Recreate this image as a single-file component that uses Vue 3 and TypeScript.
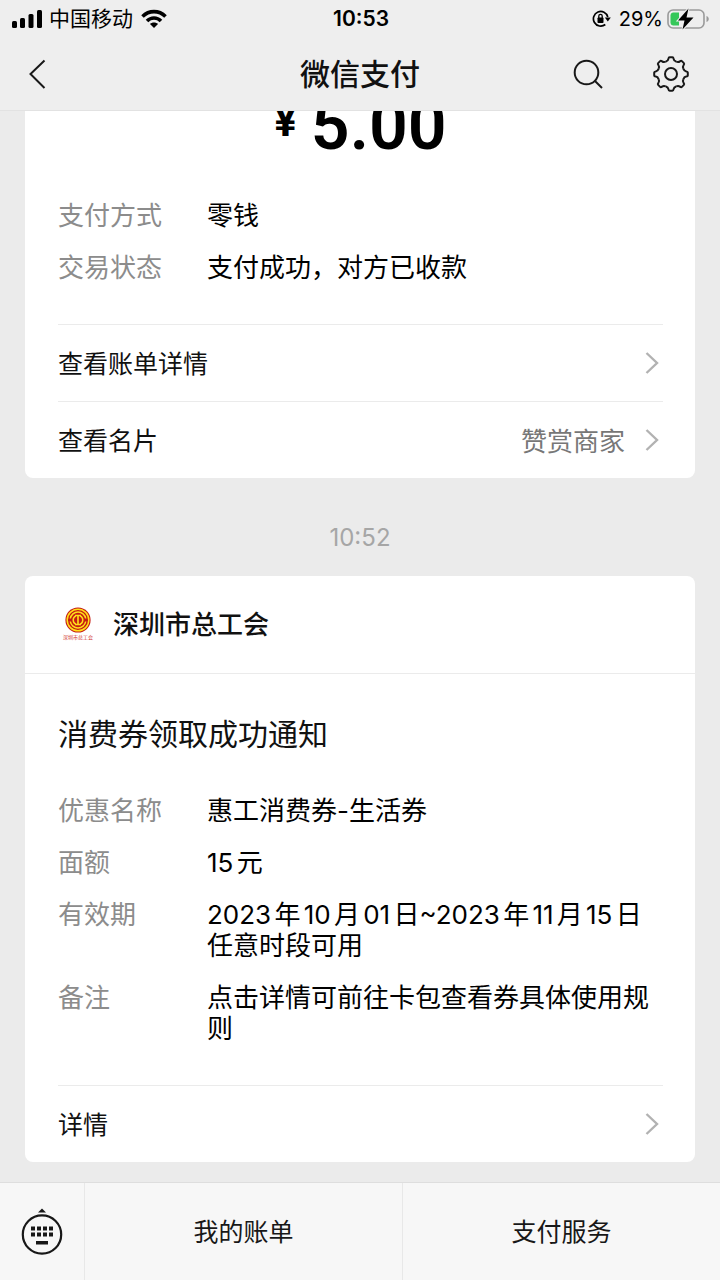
<script setup lang="ts">
interface Field {
  label: string
  value: string
}

const paymentFields: Field[] = [
  { label: '支付方式', value: '零钱' },
  { label: '交易状态', value: '支付成功，对方已收款' },
]

const couponFields: Field[] = [
  { label: '优惠名称', value: '惠工消费券-生活券' },
  { label: '面额', value: '15元' },
  { label: '有效期', value: '2023年10月01日~2023年11月15日\n任意时段可用' },
  { label: '备注', value: '点击详情可前往卡包查看券具体使用规则' },
]

const keyColumns = [0, 1, 2, 3]
const gearTeeth = [0, 45, 90, 135, 180, 225, 270, 315]
</script>

<template>
  <div class="screen">
    <header class="top">
      <div class="status">
        <div class="status-side">
          <svg class="signal" width="31" height="20" viewBox="0 0 31 20" aria-hidden="true">
            <rect x="0" y="12" width="5" height="7" rx="1.5" />
            <rect x="8" y="9" width="5" height="10" rx="1.5" />
            <rect x="16.5" y="5" width="5" height="14" rx="1.5" />
            <rect x="25" y="1" width="5" height="18" rx="1.5" />
          </svg>
          <span class="carrier">中国移动</span>
          <svg width="26" height="20" viewBox="0 0 26 20" aria-hidden="true">
            <g fill="none" stroke="#000" stroke-width="3.6">
              <path d="M1.5 7.5C8 1 18 1 24.500 7.500" />
              <path d="M6 12C10 8 16 8 20 12" />
            </g>
            <path d="M13 19L9 15C11 13 15 13 17 15Z" />
          </svg>
        </div>
        <time class="clock">10:53</time>
        <div class="status-side status-right">
          <svg width="19" height="18" viewBox="0 0 19 18" aria-hidden="true">
            <path d="M13.300 14.500A7.300 7.300 0 1 1 15.800 7" fill="none" stroke="#000" stroke-width="1.700" />
            <path d="M12.800 7.500H18.800L15.800 11.500Z" />
            <rect x="5.500" y="7.500" width="6" height="5.500" rx="0.800" />
            <path d="M6.800 8V6A1.700 1.700 0 0 1 10.200 6V8" fill="none" stroke="#000" stroke-width="1.300" />
          </svg>
          <span class="percent">29%</span>
          <svg width="43" height="22" viewBox="0 0 43 22" aria-hidden="true">
            <rect x="1" y="2" width="36" height="18" rx="5" fill="none" stroke="#9a9a9a" stroke-width="1.600" />
            <path d="M39.500 8C42.500 9 42.500 13 39.500 14Z" fill="#9a9a9a" />
            <path d="M6 4.500H12V17.500H6A3 3 0 0 1 3.500 15V7A3 3 0 0 1 6 4.500Z" fill="#35c759" />
            <path d="M21.500 0.500L11 12.500H17.500L15.500 21.500L26.500 9.500H19.500Z" stroke="#eee" stroke-width="2" paint-order="stroke" />
          </svg>
        </div>
      </div>
      <nav class="nav">
        <div class="nav-side">
          <button type="button" class="icon-button" aria-label="返回">
            <svg width="36" height="36" viewBox="0 0 36 36" class="line">
              <path d="M24.500 4.500L10.500 18L24.500 32" />
            </svg>
          </button>
        </div>
        <h1>微信支付</h1>
        <div class="nav-side nav-right">
          <button type="button" class="icon-button" aria-label="搜索">
            <svg width="36" height="36" viewBox="0 0 36 36" class="line">
              <circle cx="16.500" cy="16.500" r="11.800" />
              <path d="M24.500 24.500L32 32" />
            </svg>
          </button>
          <button type="button" class="icon-button" aria-label="设置">
            <svg width="36" height="36" viewBox="-18 -18 36 36" class="line">
              <g v-for="angle in gearTeeth" :key="angle" :transform="`rotate(${angle})`">
                <path d="M-5.200 -12.500Q-2.900 -13 -2.600 -15.200Q-2.400 -16.800 -1.400 -16.800H1.400Q2.400 -16.800 2.600 -15.200Q2.900 -13 5.200 -12.500" />
              </g>
              <circle r="6" />
            </svg>
          </button>
        </div>
      </nav>
    </header>

    <main class="messages">
      <article class="card">
        <div class="content">
          <p class="amount"><span class="currency">¥</span><span>5.00</span></p>
          <dl>
            <div v-for="field in paymentFields" :key="field.label" class="field">
              <dt>{{ field.label }}</dt>
              <dd>{{ field.value }}</dd>
            </div>
          </dl>
        </div>
        <a href="#bill" class="link-row">
          <span class="link-text">查看账单详情</span>
          <svg class="chevron" width="14" height="24" viewBox="0 0 14 24"><path d="M1.500 2L12 12L1.500 22" /></svg>
        </a>
        <a href="#merchant" class="link-row">
          <span class="link-text">查看名片</span>
          <span class="link-text merchant">赞赏商家</span>
          <svg class="chevron" width="14" height="24" viewBox="0 0 14 24"><path d="M1.500 2L12 12L1.500 22" /></svg>
        </a>
      </article>

      <time class="timestamp">10:52</time>

      <article class="card">
        <header class="sender">
          <svg width="40" height="40" viewBox="0 0 40 40" aria-hidden="true">
            <circle cx="20" cy="15" r="12.600" fill="#c51a12" />
            <g fill="none" stroke="#ffdf1b">
              <circle cx="20" cy="15" r="10.800" stroke-width="1.500" />
              <path d="M12.300 13.500A7.800 7.800 0 0 1 27.700 13.500M12.300 16.500A7.800 7.800 0 0 0 27.700 16.500" stroke-width="1.500" />
              <path d="M17.800 10.800A4.700 4.700 0 0 0 17.800 19.200M22.200 10.800A4.700 4.700 0 0 1 22.200 19.200" stroke-width="1.500" />
              <path d="M20 10V20M17 10.500H23M17 19.500H23" stroke-width="1.600" />
            </g>
            <text x="20" y="34" text-anchor="middle" class="logo-name">深圳市总工会</text>
          </svg>
          <h2>深圳市总工会</h2>
        </header>
        <div class="content">
          <h3>消费券领取成功通知</h3>
          <dl>
            <div v-for="field in couponFields" :key="field.label" class="field">
              <dt>{{ field.label }}</dt>
              <dd>{{ field.value }}</dd>
            </div>
          </dl>
        </div>
        <a href="#coupon" class="link-row">
          <span class="link-text">详情</span>
          <svg class="chevron" width="14" height="24" viewBox="0 0 14 24"><path d="M1.500 2L12 12L1.500 22" /></svg>
        </a>
      </article>
    </main>

    <footer class="menu">
      <button type="button" class="keyboard" aria-label="键盘">
        <svg width="42" height="48" viewBox="0 0 42 48">
          <path d="M17 4.500L21 0.500L25 4.500Z" />
          <circle cx="21" cy="26.500" r="19.200" fill="none" stroke="#181818" stroke-width="2.200" />
          <g v-for="column in keyColumns" :key="column">
            <rect :x="10 + column * 6" y="18.500" width="4" height="4" />
            <rect :x="10 + column * 6" y="24.500" width="4" height="4" />
          </g>
          <rect x="15" y="33" width="12" height="3.500" />
        </svg>
      </button>
      <button type="button" class="menu-item">我的账单</button>
      <button type="button" class="menu-item">支付服务</button>
    </footer>
  </div>
</template>

<style>
body {
  margin: 0;
  background: #ebebeb;
}
</style>

<style scoped>
.screen {
  height: 100vh;
  display: flex;
  flex-direction: column;
  overflow: hidden;
  background: #ebebeb;
  color: #111;
  font-family: Inter, "Noto Sans CJK SC", sans-serif;
}

h1, h2, h3, p, dl, dd {
  margin: 0;
}

button {
  padding: 0;
  border: 0;
  background: none;
  color: inherit;
  font: inherit;
}

svg {
  display: block;
  flex: none;
}

.top {
  flex: none;
  background: #eee;
  border-bottom: 1px solid #e2e2e2;
}

.status {
  height: 37px;
  padding: 0 10px 0 12px;
  display: flex;
  align-items: center;
  color: #000;
}

.status-side, .nav-side {
  flex: 1;
  display: flex;
  align-items: center;
}

.status-right, .nav-right {
  justify-content: flex-end;
}

.signal {
  margin-right: 6px;
}

.carrier {
  margin-right: 8px;
  font-size: 21px;
  line-height: 37px;
}

.clock {
  font-size: 21px;
  font-weight: 600;
}

.percent {
  margin: 0 4px 0 8px;
  font-size: 20px;
}

.nav {
  height: 73px;
  padding-left: 20px;
  padding-right: 20px;
  display: grid;
  grid-template-columns: 1fr auto 1fr;
  align-items: center;
}

.nav-right {
  gap: 47px;
  padding-right: 11px;
}

.nav h1 {
  font-size: 30px;
  font-weight: 500;
  line-height: 40px;
}

.line {
  fill: none;
  stroke: #181818;
  stroke-width: 2;
}

.messages {
  flex: 1;
  min-height: 0;
  padding: 0 25px 20px;
  display: flex;
  flex-direction: column;
  justify-content: flex-end;
  overflow: hidden;
}

.card {
  flex: none;
  border-radius: 8px;
  background: #fff;
}

.content {
  padding: 40px 32px 41px 33px;
}

.amount {
  display: flex;
  justify-content: center;
  gap: 14px;
  margin-bottom: 34px;
  color: #000;
  font-family: Roboto, Inter, sans-serif;
  font-size: 68px;
  font-weight: 600;
  line-height: 80px;
}

.currency {
  font-size: 42px;
  font-weight: 700;
  line-height: 72px;
}

dl {
  display: flex;
  flex-direction: column;
  gap: 21px;
  font-size: 26px;
  line-height: 31px;
}

.field {
  display: flex;
}

dt {
  flex: none;
  width: 149px;
  color: #8c8c8c;
}

dd {
  flex: 1;
  color: #000;
  white-space: pre-line;
  text-autospace: normal;
}

.link-row {
  height: 77px;
  box-sizing: border-box;
  margin: 0 32px 0 33px;
  padding-right: 4px;
  display: flex;
  align-items: center;
  justify-content: space-between;
  border-top: 1px solid #ebebeb;
  color: #111;
  font-size: 25px;
  text-decoration: none;
}

.link-text {
  padding-bottom: 2px;
}

.merchant {
  margin: 0 20px 0 auto;
  color: #777;
  font-size: 26px;
}

.chevron {
  fill: none;
  stroke: #b2b2b2;
  stroke-width: 2.4;
}

.timestamp {
  flex: none;
  padding: 44px 0 23px;
  color: #a6a6a6;
  font-size: 24px;
  line-height: 31px;
  text-align: center;
}

.sender {
  height: 98px;
  box-sizing: border-box;
  padding: 0 33px;
  display: flex;
  align-items: center;
  gap: 15px;
  border-bottom: 1px solid #ebebeb;
}

.sender h2 {
  font-size: 26px;
  font-weight: 500;
  line-height: 36px;
}

.logo-name {
  fill: #d0302c;
  font-family: "Liberation Serif", "Noto Sans CJK SC", serif;
  font-size: 5px;
}

h3 {
  margin-bottom: 41px;
  font-size: 30px;
  font-weight: 400;
  line-height: 40px;
}

.menu {
  flex: none;
  height: 98px;
  box-sizing: border-box;
  display: flex;
  border-top: 1px solid #dedede;
  background: #f7f7f7;
  color: #181818;
  font-size: 25px;
}

.menu button {
  display: flex;
  align-items: center;
  justify-content: center;
}

.menu .menu-item {
  flex: 1;
  padding-bottom: 3px;
  border-left: 1px solid #e8e8e8;
}

.keyboard {
  flex: none;
  width: 84px;
}

.keyboard svg {
  fill: #181818;
}
</style>
